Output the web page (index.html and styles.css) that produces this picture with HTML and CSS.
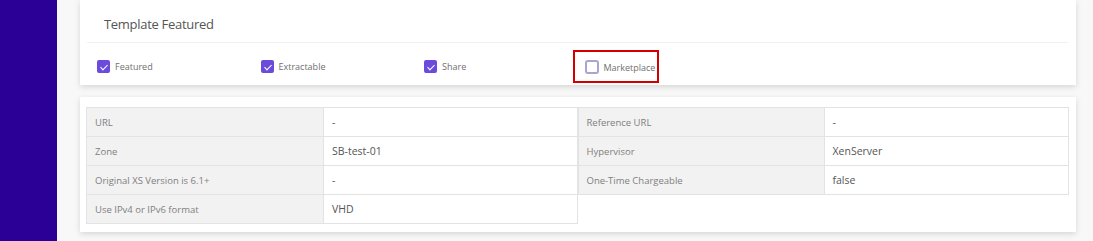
FILE: index.html
```html
<!DOCTYPE html>
<html>
<head>
    <title>Template Details</title>
    <link rel="stylesheet" href="styles.css">
</head>
<body>
    <aside class="sidebar"></aside>
    <main class="content">
        <section class="card featured">
            <div class="card-header">Template Featured</div>
            <div class="options">
                <label class="option"><span class="box checked"></span>Featured</label>
                <label class="option"><span class="box checked"></span>Extractable</label>
                <label class="option"><span class="box checked"></span>Share</label>
                <label class="option highlight"><span class="box"></span>Marketplace</label>
            </div>
        </section>

        <section class="card details">
            <table class="info left">
                <tr><td class="label">URL</td><td class="value">-</td></tr>
                <tr><td class="label">Zone</td><td class="value">SB-test-01</td></tr>
                <tr><td class="label">Original XS Version is 6.1+</td><td class="value">-</td></tr>
                <tr><td class="label">Use IPv4 or IPv6 format</td><td class="value">VHD</td></tr>
            </table>
            <table class="info right">
                <tr><td class="label">Reference URL</td><td class="value">-</td></tr>
                <tr><td class="label">Hypervisor</td><td class="value">XenServer</td></tr>
                <tr><td class="label">One-Time Chargeable</td><td class="value">false</td></tr>
            </table>
        </section>
    </main>
</body>
</html>
```

FILE: styles.css
```css
body {
    margin: 0;
    display: flex;
    height: 241px;
    overflow: hidden;
    background-color: #f8f8f8;
    font-family: 'Open Sans', sans-serif;
    color: #666;
}
.sidebar {
    width: 57px;
    flex-shrink: 0;
    background-color: #2b0096;
}
.content {
    flex: 1;
    padding: 0 17px 0 23px;
}
.card {
    background: white;
    box-shadow: 0 2px 6px rgba(0,0,0,0.14);
}
.featured {
    padding: 0 8px 0 7px;
}
.card-header {
    height: 43px;
    box-sizing: border-box;
    padding: 15px 0 0 17px;
    font-size: 13px;
    font-weight: 500;
    letter-spacing: -0.3px;
    color: #555;
    border-bottom: 1px solid #f0f0f0;
}
.options {
    display: flex;
    height: 42px;
    box-sizing: border-box;
    padding-top: 5px;
    align-items: center;
}
.option {
    width: 163.5px;
    box-sizing: border-box;
    padding-left: 10px;
    display: flex;
    align-items: center;
    font-size: 9px;
    color: #707070;
}
.box {
    width: 13px;
    height: 13px;
    box-sizing: border-box;
    border-radius: 2px;
    margin-right: 5px;
    border: 2px solid #aaa3d3;
    position: relative;
}
.box.checked {
    background-color: #6a4bdb;
    border-color: #6a4bdb;
}
.box.checked::after {
    content: '';
    position: absolute;
    left: 3px;
    top: 1px;
    width: 3px;
    height: 6px;
    border: solid white;
    border-width: 0 1.3px 1.3px 0;
    transform: rotate(45deg);
}
.option.highlight {
    width: auto;
    margin-left: -5px;
    padding: 8px 2px 7px 10px;
    border: 2px solid #d40000;
}
.option.highlight .box {
    width: 14px;
    height: 14px;
    border-radius: 3px;
}
.details {
    margin-top: 12px;
    padding: 10px 7px 8px 6px;
    display: flex;
    align-items: flex-start;
}
.info {
    border-collapse: collapse;
    width: 50%;
}
.info td {
    height: 29px;
    box-sizing: border-box;
    padding: 0 8px;
    border: 1px solid #e3e3e3;
}
.label {
    background-color: #f2f2f2;
    font-size: 9.5px;
    color: #808080;
}
.value {
    font-size: 10.5px;
    color: #555;
}
.left .label { width: 237px; }
.right .label { width: 246px; }
```
